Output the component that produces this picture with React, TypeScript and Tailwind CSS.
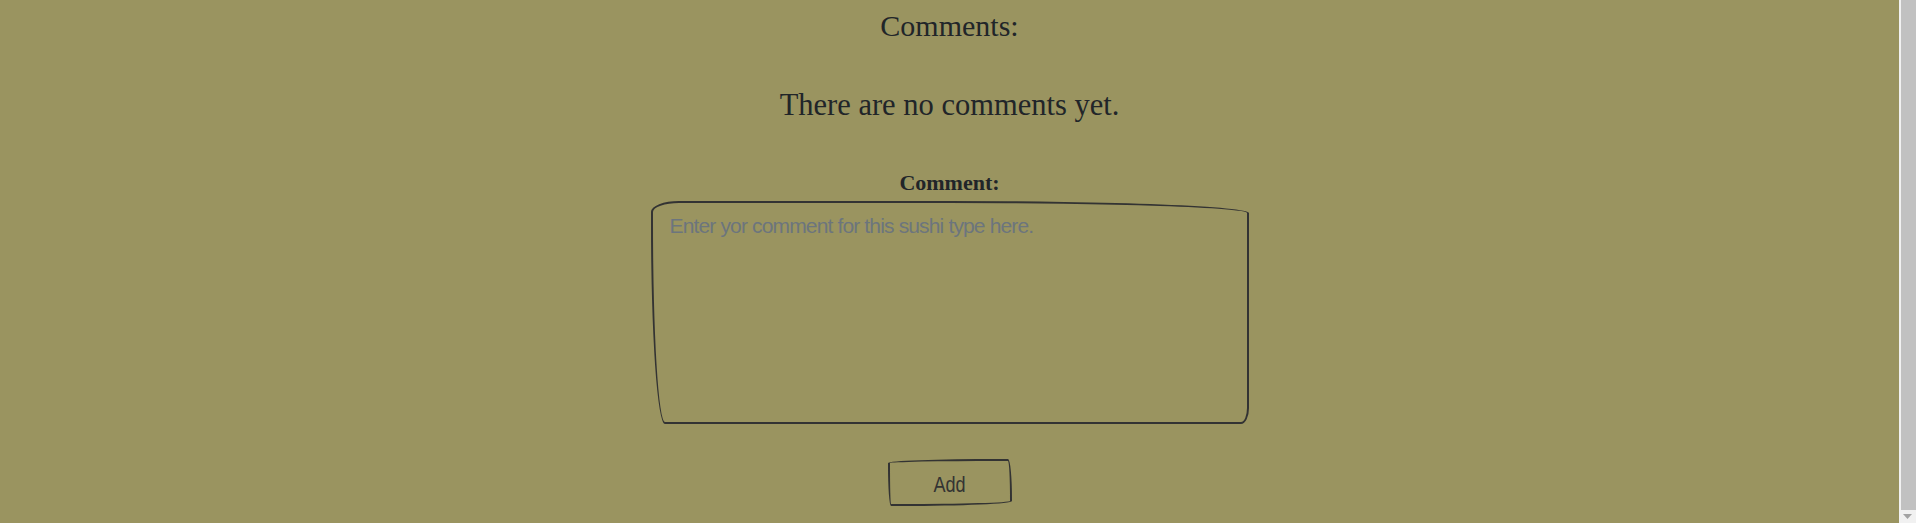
import React from "react";

export default function App() {
  return (
    <div className="flex h-[523px] w-full overflow-hidden bg-[#9a9460]">
      <main className="flex flex-1 flex-col items-center text-[#212529]">
        <h2
          className="mt-[8px] text-[30px] leading-[36px] font-normal"
          style={{ fontFamily: '"Liberation Serif", serif' }}
        >
          Comments:
        </h2>
        <p
          className="mt-[43px] text-[30.5px] leading-[36px]"
          style={{ fontFamily: '"Liberation Serif", serif' }}
        >
          There are no comments yet.
        </p>
        <label
          htmlFor="comment"
          className="mt-[47px] text-[22px] leading-[26px] font-bold"
          style={{ fontFamily: '"Liberation Serif", serif' }}
        >
          Comment:
        </label>
        <textarea
          id="comment"
          placeholder="Enter yor comment for this sushi type here."
          className="mt-[5px] h-[223px] w-[598px] resize-none border-2 border-[#333] bg-transparent pt-[10px] pl-[17px] text-[21px] leading-[26px] tracking-[-0.85px] outline-none placeholder:text-[#6c757d] rounded-tl-[28px_11px] rounded-tr-[300px_12px] rounded-br-[8px_16px] rounded-bl-[14px_200px]"
          style={{ fontFamily: '"Liberation Sans", sans-serif' }}
        />
        <button
          type="button"
          className="mt-[35px] flex h-[47px] w-[124px] items-center justify-center border-2 border-[#333] bg-transparent pt-[5px] text-[22px] leading-[26px] text-[#333] rounded-tl-[110px_4px] rounded-tr-[4px_40px] rounded-br-[110px_5px] rounded-bl-[3px_40px]"
          style={{ fontFamily: '"Liberation Sans", sans-serif' }}
        >
          <span className="inline-block scale-x-[0.82]">Add</span>
        </button>
      </main>
      <div className="flex w-[17px] flex-col bg-[#f1f1f1]">
        <div className="ml-[2px] h-[510px] bg-[#c1c1c1]" />
        <div className="flex flex-1 items-center justify-center">
          <svg width="9" height="6" viewBox="0 0 9 6">
            <polygon points="0,0 9,0 4.5,5" fill="#a3a3a3" />
          </svg>
        </div>
      </div>
    </div>
  );
}
